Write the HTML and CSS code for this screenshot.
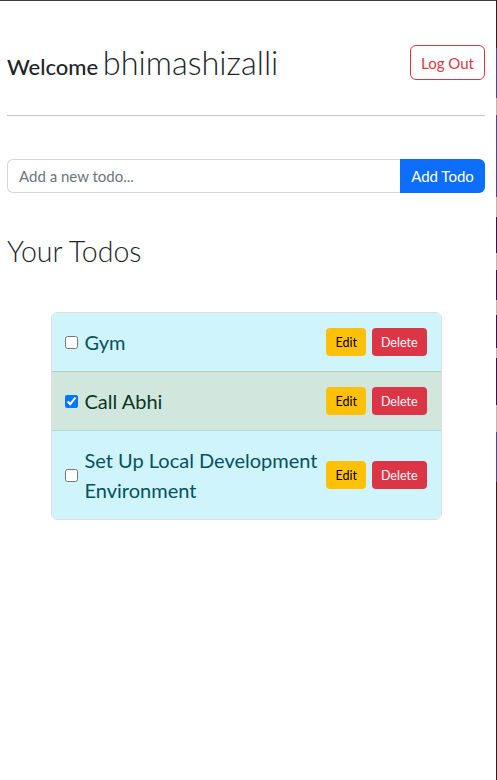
FILE: index.html
```html
<!DOCTYPE html>
<html lang="en">
<head>
<meta charset="utf-8">
<title>Todos</title>
<link rel="stylesheet" href="styles.css">
</head>
<body>
<main class="page">
  <header class="header">
    <h3 class="greeting"><span class="welcome">Welcome</span> <span class="user">bhimashizalli</span></h3>
    <button class="btn-logout" type="button">Log Out</button>
  </header>
  <hr class="divider">
  <form class="add-form">
    <input class="add-input" type="text" placeholder="Add a new todo...">
    <button class="add-btn" type="button">Add Todo</button>
  </form>
  <h2 class="todos-title">Your Todos</h2>
  <ul class="todo-list">
    <li class="todo-item item-info">
      <input class="todo-check" type="checkbox">
      <span class="todo-text">Gym</span>
      <div class="actions"><button class="btn-edit" type="button">Edit</button><button class="btn-delete" type="button">Delete</button></div>
    </li>
    <li class="todo-item item-success">
      <input class="todo-check" type="checkbox" checked>
      <span class="todo-text">Call Abhi</span>
      <div class="actions"><button class="btn-edit" type="button">Edit</button><button class="btn-delete" type="button">Delete</button></div>
    </li>
    <li class="todo-item item-info">
      <input class="todo-check" type="checkbox">
      <span class="todo-text">Set Up Local Development Environment</span>
      <div class="actions"><button class="btn-edit" type="button">Edit</button><button class="btn-delete" type="button">Delete</button></div>
    </li>
  </ul>
</main>
<div class="edge"></div>
</body>
</html>
```

FILE: styles.css
```css
html, body {
  margin: 0;
  padding: 0;
  background: #ffffff;
}
body {
  border-top: 1px solid #3a3a3a;
  font-family: "Lato", "Open Sans", sans-serif;
  color: #212529;
  min-height: 779px;
}
.page {
  padding: 0 12px 0 7px;
}
.header {
  display: flex;
  align-items: center;
  justify-content: space-between;
  height: 41px;
  margin-top: 41px;
}
.greeting {
  margin: 0;
  line-height: 1.2;
  color: #212529;
}
.welcome {
  font-size: 22px;
  font-weight: 500;
}
.user {
  font-size: 32.5px;
  font-weight: 300;
}
.btn-logout {
  height: 35px;
  padding: 0 10px;
  border: 1px solid #dc3545;
  border-radius: 6px;
  background: #fff;
  color: #dc3545;
  font-family: inherit;
  font-size: 15px;
}
.divider {
  margin: 32px 0 0 0;
  border: 0;
  border-top: 1px solid #c6c6c6;
  height: 0;
}
.add-form {
  display: flex;
  margin-top: 43px;
  height: 34px;
}
.add-input {
  flex: 1;
  min-width: 0;
  height: 34px;
  box-sizing: border-box;
  margin: 0;
  padding: 0 11px;
  border: 1px solid #d3d7dc;
  border-right: 0;
  border-radius: 6px 0 0 6px;
  font-family: inherit;
  font-size: 15px;
  color: #212529;
  outline: none;
}
.add-input::placeholder {
  color: #6c757d;
}
.add-btn {
  width: 85px;
  height: 34px;
  margin: 0;
  border: 0;
  border-radius: 0 6px 6px 0;
  background: #0d6efd;
  color: #fff;
  font-family: inherit;
  font-size: 15px;
}
.todos-title {
  margin: 41px 0 0 0;
  font-size: 28.5px;
  font-weight: 300;
  line-height: 1.2;
  color: #212529;
}
.todo-list {
  list-style: none;
  width: 391px;
  margin: 44px auto 0 auto;
  padding: 0;
  border: 1px solid rgba(0, 0, 0, 0.125);
  border-radius: 6px;
  overflow: hidden;
  box-sizing: border-box;
}
.todo-item {
  display: flex;
  align-items: center;
  padding: 14px 14px 14px 13px;
  border-top: 1px solid rgba(0, 0, 0, 0.125);
}
.todo-item:first-child {
  border-top: 0;
}
.item-info {
  background: #cff4fc;
  color: #055160;
}
.item-success {
  background: #d1e7dd;
  color: #0a3622;
}
.todo-check {
  width: 13px;
  height: 13px;
  margin: 0 7px 0 0;
  flex: none;
}
.todo-text {
  flex: 1;
  font-size: 20px;
  line-height: 30px;
}
.actions {
  display: flex;
  gap: 6px;
  margin-left: 4px;
  flex: none;
}
.btn-edit,
.btn-delete {
  height: 28px;
  padding: 0 9px;
  border: 0;
  border-radius: 4px;
  font-family: inherit;
  font-size: 12.5px;
}
.btn-edit {
  background: #ffc107;
  color: #000;
}
.btn-delete {
  background: #dc3545;
  color: #fff;
}
.edge {
  position: fixed;
  top: 0;
  bottom: 0;
  right: 0;
  width: 1px;
  background: linear-gradient(to bottom,
    #202020 0px, #202020 48px,
    #2a52a8 48px, #2a52a8 98px,
    #b8b8b8 98px, #b8b8b8 115px,
    #2a52a8 115px, #2a52a8 197px,
    #b8b8b8 197px, #b8b8b8 217px,
    #1c1a6e 217px, #1c1a6e 253px,
    #b8b8b8 253px, #b8b8b8 270px,
    #1c1a6e 270px, #1c1a6e 300px,
    #b8b8b8 300px, #b8b8b8 315px,
    #1c1a6e 315px, #1c1a6e 348px,
    #b8b8b8 348px, #b8b8b8 358px,
    #1c1a6e 358px, #1c1a6e 405px,
    #b8b8b8 405px, #b8b8b8 432px,
    #2a52a8 432px, #2a52a8 482px,
    #202020 482px, #202020 780px);
}
```
